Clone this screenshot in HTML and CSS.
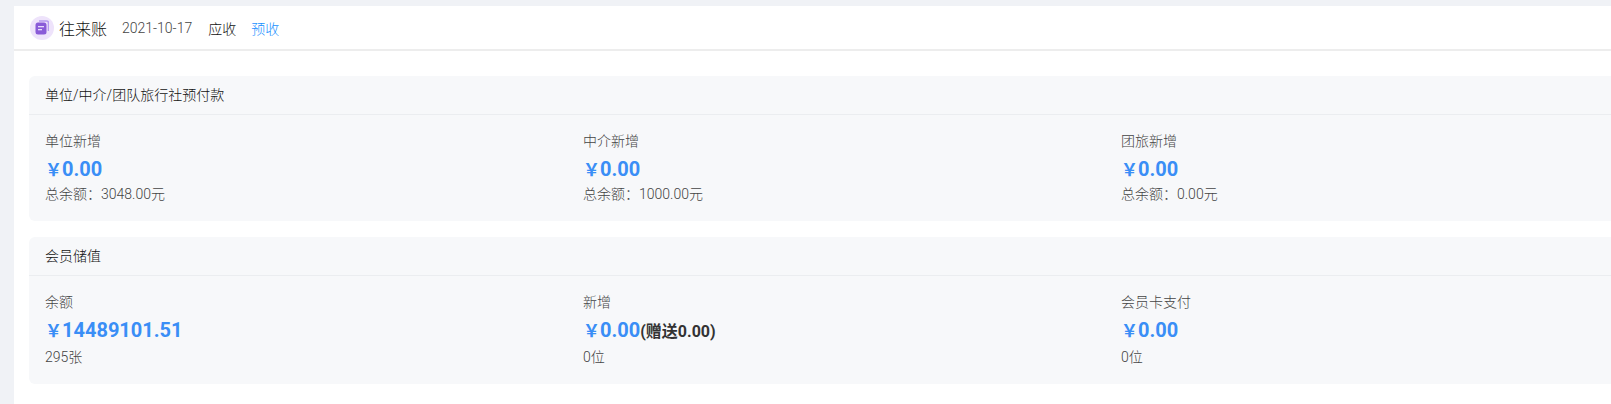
FILE: index.html
```html
<!DOCTYPE html>
<html lang="zh-CN">

<head>
  <meta charset="UTF-8" />
  <title>往来账</title>
  <link rel="stylesheet" href="styles.css">
</head>

<body>
  <div class="page">
    <div class="topbar">
      <span class="logo">
        <svg width="14" height="15" viewBox="0 0 14 15">
          <path d="M4 1h7.5a2 2 0 0 1 2 2V11" fill="none" stroke="#b79af0" stroke-width="1.6" />
          <rect x="0.5" y="2.5" width="11" height="12" rx="2.5" fill="#8a5bd8" />
          <rect x="3" y="6" width="6" height="1.3" fill="#e6dbfa" />
          <rect x="3" y="9" width="4" height="1.3" fill="#e6dbfa" />
        </svg>
      </span>
      <span class="title">往来账</span>
      <span class="date">2021-10-17</span>
      <a class="tab">应收</a>
      <a class="tab active">预收</a>
    </div>

    <div class="content">
      <div class="panel">
        <div class="panel-head">单位/中介/团队旅行社预付款</div>
        <div class="panel-body">
          <div class="stat">
            <div class="stat-label">单位新增</div>
            <div class="stat-value"><span class="money"><span class="yen">￥</span>0.00</span></div>
            <div class="stat-note">总余额：3048.00元</div>
          </div>
          <div class="stat">
            <div class="stat-label">中介新增</div>
            <div class="stat-value"><span class="money"><span class="yen">￥</span>0.00</span></div>
            <div class="stat-note">总余额：1000.00元</div>
          </div>
          <div class="stat">
            <div class="stat-label">团旅新增</div>
            <div class="stat-value"><span class="money"><span class="yen">￥</span>0.00</span></div>
            <div class="stat-note">总余额：0.00元</div>
          </div>
        </div>
      </div>

      <div class="panel panel-tall">
        <div class="panel-head">会员储值</div>
        <div class="panel-body">
          <div class="stat">
            <div class="stat-label">余额</div>
            <div class="stat-value"><span class="money"><span class="yen">￥</span>14489101.51</span></div>
            <div class="stat-note">295张</div>
          </div>
          <div class="stat">
            <div class="stat-label">新增</div>
            <div class="stat-value"><span class="money"><span class="yen">￥</span>0.00</span><span class="gift">(赠送0.00)</span></div>
            <div class="stat-note">0位</div>
          </div>
          <div class="stat">
            <div class="stat-label">会员卡支付</div>
            <div class="stat-value"><span class="money"><span class="yen">￥</span>0.00</span></div>
            <div class="stat-note">0位</div>
          </div>
        </div>
      </div>
    </div>
  </div>
</body>

</html>
```

FILE: styles.css
```css
* {
  box-sizing: border-box;
}

html,
body {
  height: 100%;
  overflow: hidden;
}

body {
  margin: 0;
  background: #f0f2f6;
  font-family: Roboto, "Noto Sans CJK SC", sans-serif;
  font-size: 14px;
  font-weight: 300;
  color: #111;
}

.page {
  margin: 6px 0 0 14px;
  height: 398px;
  width: 1597px;
  background: #fff;
  overflow: hidden;
}

/* top bar */
.topbar {
  display: flex;
  align-items: center;
  height: 45px;
  padding-left: 16px;
  border-bottom: 2px solid #ededed;
}

.logo {
  display: flex;
  align-items: center;
  justify-content: center;
  width: 24px;
  height: 24px;
  border-radius: 50%;
  background: #eee3fb;
}

.title {
  margin-left: 5px;
  font-size: 16px;
  color: #111;
}

.date {
  margin-left: 15px;
  color: #444;
}

.tab {
  margin-left: 16px;
  color: #111;
}

.tab + .tab {
  margin-left: 15px;
}

.tab.active {
  color: #1890ff;
}

/* panels */
.content {
  padding: 25px 0 0 15px;
}

.panel {
  width: 1614px;
  margin-bottom: 16px;
  background: #f7f8fa;
  border-radius: 6px;
}

.panel-head {
  height: 39px;
  padding-left: 16px;
  line-height: 38px;
  color: #111;
  border-bottom: 1px solid #ebedf0;
}

.panel-body {
  display: grid;
  grid-template-columns: repeat(3, 538px);
  padding: 16px 0 17px;
}

.stat {
  padding-left: 16px;
}

.stat-label,
.stat-note {
  height: 20px;
  line-height: 20px;
  color: #444;
}

.stat-value {
  height: 33px;
  line-height: 36px;
  white-space: nowrap;
}

.panel-tall .stat-value {
  height: 35px;
}

.money {
  font-size: 20px;
  font-weight: 700;
  color: #3a8ef6;
}

.yen {
  font-size: 17px;
}

.gift {
  font-size: 16px;
  font-weight: 700;
  color: #333;
}
```
